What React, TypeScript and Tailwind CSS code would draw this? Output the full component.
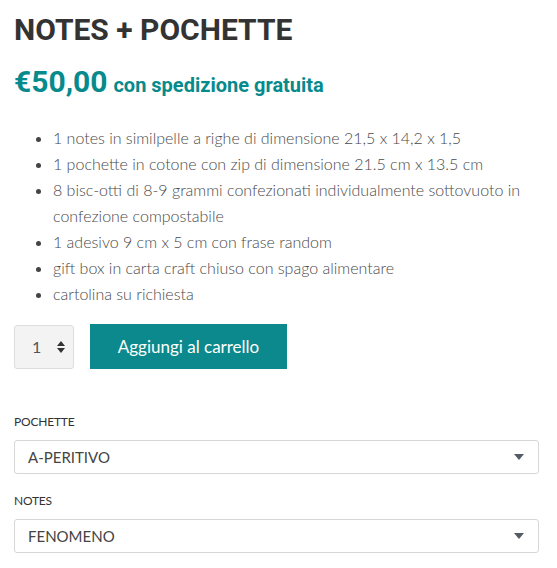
import { useState } from 'react';

const items = [
  '1 notes in similpelle a righe di dimensione 21,5 x 14,2 x 1,5',
  '1 pochette in cotone con zip di dimensione 21.5 cm x 13.5 cm',
  '8 bisc-otti di 8-9 grammi confezionati individualmente sottovuoto in confezione compostabile',
  '1 adesivo 9 cm x 5 cm con frase random',
  'gift box in carta craft chiuso con spago alimentare',
  'cartolina su richiesta',
];

function Caret() {
  return (
    <svg width="10" height="6" viewBox="0 0 10 6" className="shrink-0">
      <path d="M0 0h10L5 6z" fill="#555b63" />
    </svg>
  );
}

function SelectBox({ label, value }: { label: string; value: string }) {
  return (
    <div>
      <div className="text-[12px] uppercase text-[#333] mb-[9px] tracking-[-0.2px]">{label}</div>
      <div className="flex items-center justify-between h-[34px] border border-[#d7d7d7] rounded-[3px] pl-[13px] pr-[14px] text-[15px] text-[#444]">
        <span>{value}</span>
        <Caret />
      </div>
    </div>
  );
}

export default function App() {
  const [qty] = useState(1);

  return (
    <div className="bg-white w-[557px] h-[568px] pl-[14px] pr-[18px] pt-[11px] font-['Lato',sans-serif]">
      <h1 className="font-['Roboto',sans-serif] font-bold text-[30px] leading-[38px] text-[#333]">
        NOTES + POCHETTE
      </h1>

      <div className="mt-[15px] flex items-baseline gap-[6px] font-['Roboto',sans-serif] font-bold text-[#078a8c]">
        <span className="text-[30px] leading-[36px]">€50,00</span>
        <span className="text-[20px]">con spedizione gratuita</span>
      </div>

      <ul className="mt-[25px] pl-[39px] list-disc text-[16px] leading-[26px] text-[#4a4a4a] font-light marker:text-[#444]">
        {items.map(t => (
          <li key={t}>{t}</li>
        ))}
      </ul>

      <div className="mt-[17px] flex items-center gap-[16px]">
        <div className="w-[60px] h-[44px] border border-[#ddd] rounded-[3px] bg-[#f3f3f3] flex items-center justify-between pl-[17px] pr-[8px] text-[16px] text-[#555]">
          <span>{qty}</span>
          <svg width="8" height="12" viewBox="0 0 8 12">
            <path d="M0 5L4 0L8 5z M0 7L4 12L8 7z" fill="#333" />
          </svg>
        </div>
        <button className="w-[197px] h-[45px] bg-[#0b898c] text-white text-[17px]">
          Aggiungi al carrello
        </button>
      </div>

      <div className="mt-[44px] flex flex-col gap-[18px]">
        <SelectBox label="Pochette" value="A-PERITIVO" />
        <SelectBox label="Notes" value="FENOMENO" />
      </div>
    </div>
  );
}
